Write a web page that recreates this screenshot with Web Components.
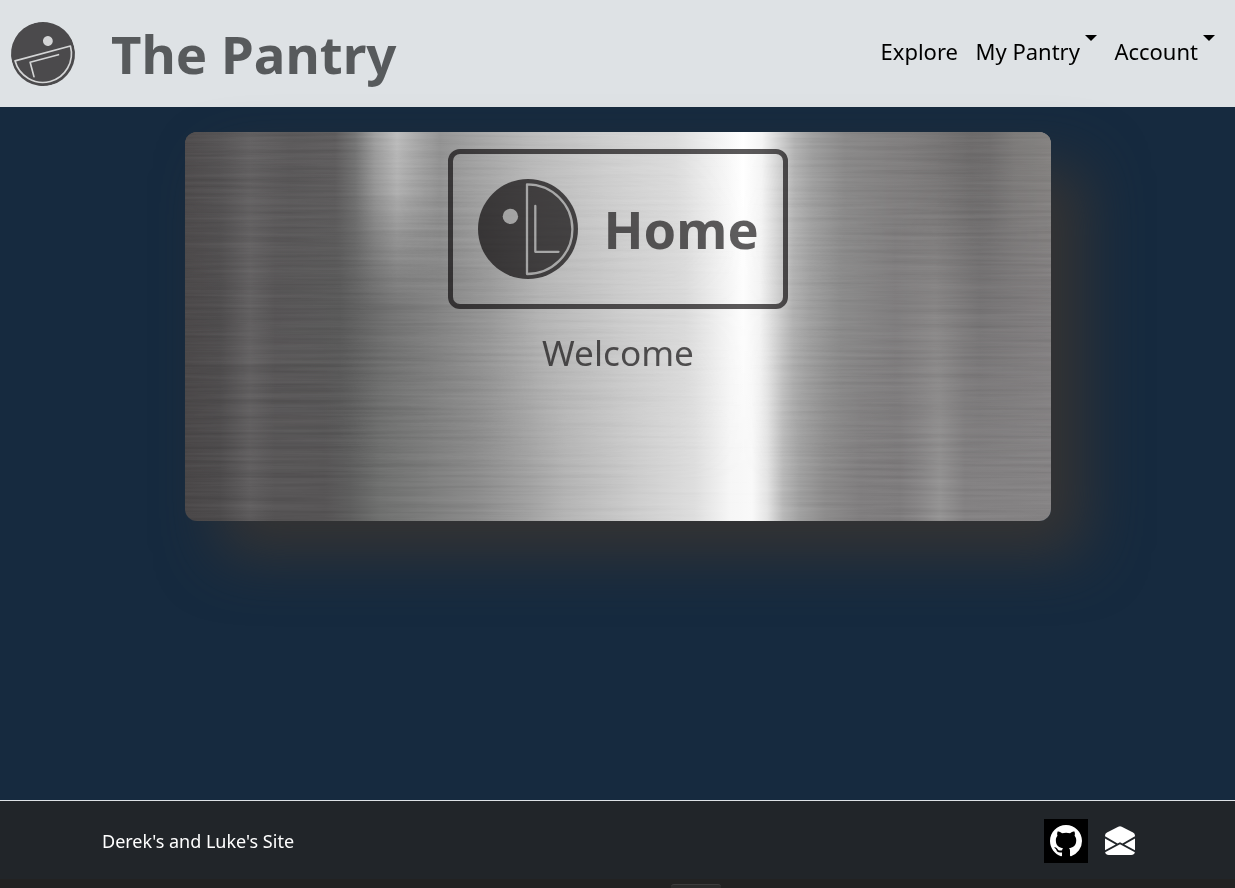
<!DOCTYPE html>
<html lang="en">
<head>
<meta charset="utf-8">
<title>The Pantry</title>
<style>
html,body{margin:0;height:100%}
body{background:#222;font-family:"Noto Sans",sans-serif;color:#212529;overflow:hidden}
</style>
</head>
<body>
<pantry-page>
  <site-header slot="header" title-text="The Pantry">
    <nav-link>Explore</nav-link>
    <nav-link menu>My Pantry</nav-link>
    <nav-link menu>Account</nav-link>
  </site-header>
  <steel-card>
    <home-badge>Home</home-badge>
    <welcome-text>Welcome</welcome-text>
  </steel-card>
  <site-footer slot="footer">Derek's and Luke's Site</site-footer>
</pantry-page>
<script>
function define(name, markup, setup) {
  const t = document.createElement('template');
  t.innerHTML = markup;
  customElements.define(name, class extends HTMLElement {
    constructor() {
      super();
      this.attachShadow({mode: 'open'}).append(t.content.cloneNode(true));
    }
    connectedCallback() { if (setup) setup(this); }
  });
}

define('dl-logo', `
<style>:host{display:block;width:100px;height:100px;flex:none}svg{display:block;width:100%;height:100%;opacity:var(--logo-opacity,.7)}</style>
<svg viewBox="0 0 100 100"><circle cx="50" cy="50" r="50" fill="#0e0b0c"/>
<g fill="none" stroke="var(--logo-line,#a0a0a0)" stroke-width="var(--logo-stroke,2.3)" stroke-linejoin="round" stroke-linecap="round">
<path d="M49 5.4A45.4 44.8 0 0 1 49 95Z"/><path d="M57.3 27V72.8H80.5"/></g>
<circle cx="32.4" cy="37.4" r="7.7" fill="var(--logo-line,#a0a0a0)"/></svg>`);

define('nav-link', `
<style>
:host{display:flex;align-items:flex-start;font-size:22px;line-height:33px;color:#000;white-space:nowrap}
i{display:none;width:0;height:0;border:6px solid transparent;border-top-color:#000;border-bottom:0;margin:0 0 0 5px}
:host([menu]) i{display:block}
</style><span><slot></slot></span><i></i>`);

define('site-header', `
<style>
:host{display:flex;align-items:center;box-sizing:border-box;height:107px;padding:0 20px 0 11px;background:#dee2e5}
dl-logo{width:64px;height:64px;transform:rotate(75deg);--logo-line:#d0d0d0;--logo-stroke:2.6}
h1{margin:0 0 0 36px;font-size:52.8px;line-height:72px;font-weight:700;color:#1f2123;opacity:.7;white-space:nowrap}
nav{display:flex;gap:17.5px;margin:-5px 0 0 auto;align-items:flex-start}
</style>
<dl-logo></dl-logo><h1></h1><nav><slot></slot></nav>`,
  el => el.shadowRoot.querySelector('h1').textContent = el.getAttribute('title-text'));

define('steel-card', `
<style>
:host{display:grid;box-sizing:border-box;width:866px;height:389px;margin:25px 0 0 185px;border-radius:12px;box-shadow:34px 34px 60px #363433;color:#1c1a1b}
.metal,.content{grid-area:1/1;min-width:0;min-height:0}
.metal{display:grid;border-radius:12px;overflow:hidden}
.metal>*{grid-area:1/1}
.low{background:linear-gradient(90deg,#4a4748 0,#4e4c4d 35px,#5f5d5e 65px,#575556 90px,#575556 140px,#5e5e5e 165px,#6f706f 195px,#8a8a8a 290px,#a2a2a2 345px,#b4b4b4 380px,#cecece 455px,#dedede 510px,#f6f6f6 545px,#f9f9f9 567px,#e4e4e4 582px,#b8b8b8 598px,#a0a0a0 615px,#8d8c8c 640px,#807e7f 675px,#7e7c7d 715px,#868485 732px,#949393 755px,#838182 780px,#858384 866px)}
.mid{background:linear-gradient(90deg,#4c494a 0,#504e4f 35px,#646263 65px,#595758 90px,#5a5a5a 155px,#727272 205px,#848484 255px,#999 305px,#b4b4b4 355px,#cdcdcd 440px,#dadada 500px,#f0f0f0 535px,#fdfdfd 558px,#f3f3f3 575px,#d2d2d2 592px,#b2b2b2 608px,#a1a1a1 625px,#8c8c8c 655px,#7f7d7e 710px,#878585 750px,#767475 795px,#827f80 866px);
-webkit-mask-image:linear-gradient(#000 45%,transparent 90%)}
.top{background:linear-gradient(90deg,#4f4c4d 0,#565455 35px,#626061 65px,#5b595a 105px,#5f5d5e 150px,#757575 170px,#a0a0a0 190px,#bebebe 212px,#acacac 230px,#959595 255px,#a4a4a4 290px,#bababa 345px,#cecece 420px,#dcdcdc 490px,#f1f1f1 530px,#fff 558px,#f4f4f4 577px,#d2d2d2 594px,#b2b2b2 610px,#9e9e9e 628px,#8a8989 660px,#7e7c7c 725px,#6e6c6c 785px,#706e6e 805px,#7d7b7a 830px,#848280 866px);
-webkit-mask-image:linear-gradient(#000 0,rgba(0,0,0,.8) 15%,rgba(0,0,0,.35) 30%,transparent 46%)}
svg{width:100%;height:100%;display:block;mix-blend-mode:soft-light;opacity:.1}
.content{position:relative;display:flex;flex-direction:column;align-items:center;padding-top:17px}
</style>
<div class="metal"><div class="low"></div><div class="mid"></div><div class="top"></div>
<svg><filter id="brush" x="0" y="0" width="100%" height="100%" color-interpolation-filters="sRGB"><feTurbulence type="fractalNoise" baseFrequency="0.006 0.28" numOctaves="3" seed="7"/><feColorMatrix values="1.6 0 0 0 -.3  1.6 0 0 0 -.3  1.6 0 0 0 -.3  0 0 0 0 1"/></filter><rect width="100%" height="100%" filter="url(#brush)"/></svg></div>
<div class="content"><slot></slot></div>`);

define('home-badge', `
<style>
:host{display:flex;align-items:center;box-sizing:border-box;width:340px;height:160px;padding-left:25px;border:5px solid rgba(10,8,9,.67);border-radius:12px}
h2{margin:-1px 0 0 25.5px;font-size:52.4px;line-height:72px;font-weight:700;opacity:.7}
</style><dl-logo></dl-logo><h2><slot></slot></h2>`);

define('welcome-text', `
<style>:host{display:block;margin-top:17px;font-size:35.2px;line-height:52px;opacity:.73}</style><slot></slot>`);

define('site-footer', `
<style>
:host{display:flex;align-items:center;box-sizing:border-box;height:79px;border-top:1px solid #dee2e6;padding:1px 100px 0 102px;background:#212529;color:#fff;font-size:18px;line-height:27px}
span{margin-top:1px}
.git{display:flex;align-items:center;justify-content:center;width:44px;height:44px;margin-left:auto;background:#000}
svg{display:block;fill:#fff}
.mail{margin-left:17px}
</style>
<span><slot></slot></span>
<div class="git"><svg width="32" height="32" viewBox="0 0 16 16"><path d="M8 0C3.58 0 0 3.58 0 8c0 3.54 2.29 6.53 5.47 7.59.4.07.55-.17.55-.38 0-.19-.01-.82-.01-1.49-2.01.37-2.53-.49-2.69-.94-.09-.23-.48-.94-.82-1.13-.28-.15-.68-.52-.01-.53.63-.01 1.08.58 1.23.82.72 1.21 1.87.87 2.33.66.07-.52.28-.87.51-1.07-1.78-.2-3.64-.89-3.64-3.95 0-.87.31-1.59.82-2.15-.08-.2-.36-1.02.08-2.12 0 0 .67-.21 2.2.82.64-.18 1.32-.27 2-.27s1.36.09 2 .27c1.53-1.04 2.2-.82 2.2-.82.44 1.1.16 1.92.08 2.12.51.56.82 1.27.82 2.15 0 3.07-1.87 3.75-3.65 3.95.29.25.54.73.54 1.48 0 1.07-.01 1.93-.01 2.2 0 .21.15.46.55.38A8.01 8.01 0 0 0 16 8c0-4.42-3.58-8-8-8z"/></svg></div>
<svg class="mail" width="30" height="29" preserveAspectRatio="none" viewBox="0 0 16 16"><path d="M8.941.435a2 2 0 0 0-1.882 0l-6 3.2A2 2 0 0 0 0 5.4v.314l6.709 3.932L8 8.928l1.291.718L16 5.714V5.4a2 2 0 0 0-1.059-1.765l-6-3.2ZM16 6.873l-5.693 3.337L16 13.372v-6.5Zm-.059 7.611L8 10.072.059 14.484A2 2 0 0 0 2 16h12a2 2 0 0 0 1.941-1.516ZM0 13.373l5.693-3.163L0 6.873v6.5Z"/></svg>`);

define('pantry-page', `
<style>
:host{display:flex;flex-direction:column;height:888px;background:#222}
main{flex:1;min-height:0;display:flex;flex-direction:column;background:#162a3f}
.edge{height:9px;display:flex;align-items:flex-end;padding-left:671px}
.edge i{box-sizing:border-box;width:50px;height:4px;background:#2b2b2b;border-top:1px solid #3c3c3c;border-radius:3px 3px 0 0}
</style>
<slot name="header"></slot><main><slot></slot></main><slot name="footer"></slot><div class="edge"><i></i></div>`);
</script>
</body>
</html>
